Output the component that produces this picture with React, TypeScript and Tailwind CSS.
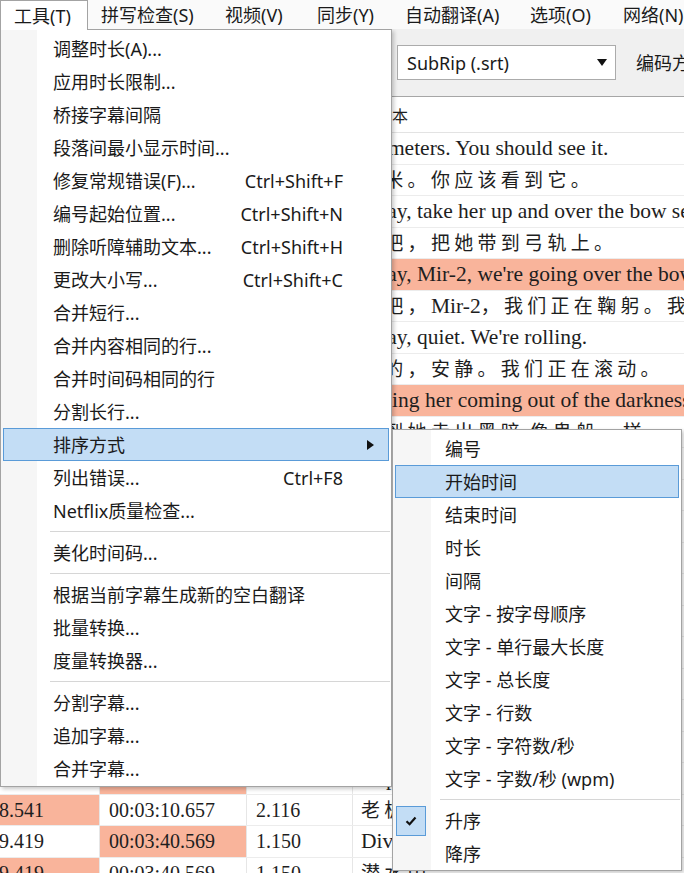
import React from 'react';

const CJK_RE = /([\u3000-\u303f\u4e00-\u9fff\uff00-\uffef]+)/;

type Entry = { label?: string; shortcut?: string; submenu?: boolean; active?: boolean; checked?: boolean; sep?: boolean };

const toolsMenu: Entry[] = [
  { label: '调整时长(A)...' },
  { label: '应用时长限制...' },
  { label: '桥接字幕间隔' },
  { label: '段落间最小显示时间...' },
  { label: '修复常规错误(F)...', shortcut: 'Ctrl+Shift+F' },
  { label: '编号起始位置...', shortcut: 'Ctrl+Shift+N' },
  { label: '删除听障辅助文本...', shortcut: 'Ctrl+Shift+H' },
  { label: '更改大小写...', shortcut: 'Ctrl+Shift+C' },
  { label: '合并短行...' },
  { label: '合并内容相同的行...' },
  { label: '合并时间码相同的行' },
  { label: '分割长行...' },
  { label: '排序方式', submenu: true, active: true },
  { label: '列出错误...', shortcut: 'Ctrl+F8' },
  { label: 'Netflix质量检查...' },
  { sep: true },
  { label: '美化时间码...' },
  { sep: true },
  { label: '根据当前字幕生成新的空白翻译' },
  { label: '批量转换...' },
  { label: '度量转换器...' },
  { sep: true },
  { label: '分割字幕...' },
  { label: '追加字幕...' },
  { label: '合并字幕...' },
];

const sortMenu: Entry[] = [
  { label: '编号' },
  { label: '开始时间', active: true },
  { label: '结束时间' },
  { label: '时长' },
  { label: '间隔' },
  { label: '文字 - 按字母顺序' },
  { label: '文字 - 单行最大长度' },
  { label: '文字 - 总长度' },
  { label: '文字 - 行数' },
  { label: '文字 - 字符数/秒' },
  { label: '文字 - 字数/秒 (wpm)' },
  { sep: true },
  { label: '升序', checked: true },
  { label: '降序' },
];

const menuBar = [
  { label: '工具(T)', w: 'w-[88px]', open: true },
  { label: '拼写检查(S)', w: 'w-[124px]' },
  { label: '视频(V)', w: 'w-[92px]' },
  { label: '同步(Y)', w: 'w-[88px]' },
  { label: '自动翻译(A)', w: 'w-[125px]' },
  { label: '选项(O)', w: 'w-[93px]' },
  { label: '网络(N)', w: 'w-[90px]' },
];

type Row = { c1: string; c2: string; c3: string; text: string; hlText?: boolean; hl1?: boolean; hl2?: boolean };

const rows: Row[] = [
  { c1: '00:02:31.210', c2: '00:02:33.544', c3: '2.334', text: '10 meters. You should see it.' },
  { c1: '00:02:31.210', c2: '00:02:33.544', c3: '2.334', text: '十米。你应该看到它。' },
  { c1: '00:02:34.012', c2: '00:02:36.890', c3: '2.878', text: 'Okay, take her up and over the bow section.' },
  { c1: '00:02:34.012', c2: '00:02:36.890', c3: '2.878', text: '好吧，把她带到弓轨上。' },
  { c1: '00:02:38.301', c2: '00:02:41.117', c3: '2.816', text: "Okay, Mir-2, we're going over the bow section.", hlText: true },
  { c1: '00:02:38.301', c2: '00:02:41.117', c3: '2.816', text: '好吧，Mir-2，我们正在鞠躬。我们' },
  { c1: '00:02:42.650', c2: '00:02:44.402', c3: '1.752', text: "Okay, quiet. We're rolling." },
  { c1: '00:02:42.650', c2: '00:02:44.402', c3: '1.752', text: '好的，安静。我们正在滚动。' },
  { c1: '00:02:46.075', c2: '00:02:49.312', c3: '3.237', text: 'Seeing her coming out of the darkness like a ghost ship.', hlText: true },
  { c1: '00:02:46.075', c2: '00:02:49.312', c3: '3.237', text: '看到她走出黑暗,像鬼船一样。' },
  { c1: '00:02:50.120', c2: '00:02:52.004', c3: '1.884', text: 'Still gets me every time.' },
  { c1: '00:02:50.120', c2: '00:02:52.004', c3: '1.884', text: '每次都让我激动。' },
  { c1: '00:02:53.400', c2: '00:02:55.980', c3: '2.580', text: 'Bring the lights down a little.' },
  { c1: '00:02:53.400', c2: '00:02:55.980', c3: '2.580', text: '把灯光调暗一点。' },
  { c1: '00:02:57.033', c2: '00:02:59.210', c3: '2.177', text: "There's the railing." },
  { c1: '00:02:57.033', c2: '00:02:59.210', c3: '2.177', text: '那是栏杆。' },
  { c1: '00:03:00.611', c2: '00:03:03.045', c3: '2.434', text: 'Look at that. Amazing.' },
  { c1: '00:03:00.611', c2: '00:03:03.045', c3: '2.434', text: '看那个，太神奇了。' },
  { c1: '00:03:04.210', c2: '00:03:06.702', c3: '2.492', text: 'Keep her steady.' },
  { c1: '00:03:04.210', c2: '00:03:06.702', c3: '2.492', text: '保持稳定。' },
  { c1: '00:03:06.900', c2: '00:03:08.433', c3: '1.533', text: 'Copy that.', hl2: true },
  { c1: '00:03:08.541', c2: '00:03:10.657', c3: '2.116', text: '老板，我们到了。', hl1: true },
  { c1: '00:03:39.419', c2: '00:03:40.569', c3: '1.150', text: 'Diving now.', hl2: true },
  { c1: '00:03:39.419', c2: '00:03:40.569', c3: '1.150', text: '潜水中。', hl1: true },
];

function Mixed({ text }: { text: string }) {
  const parts = text.split(CJK_RE).filter((p) => p !== '');
  return (
    <span className="whitespace-nowrap">
      {parts.map((p, i) =>
        CJK_RE.test(p) ? (
          <span key={i} className="font-['Noto_Sans_CJK_SC',sans-serif] text-[19px] tracking-[4.3px]">{p}</span>
        ) : (
          <span key={i} className="font-['Liberation_Serif',serif] text-[21.5px]">{p}</span>
        ),
      )}
    </span>
  );
}

function Arrow() {
  return (
    <svg width="7" height="10" viewBox="0 0 7 10" className="absolute right-[14px] top-1/2 -translate-y-1/2">
      <polygon points="0,0 7,5 0,10" fill="#111" />
    </svg>
  );
}

function Check() {
  return (
    <span className="absolute left-0 top-[1px] flex h-[30px] w-[30px] items-center justify-center border border-[#5a9bd8] bg-[#c3ddf5]">
      <svg width="12" height="10" viewBox="0 0 12 10">
        <path d="M1.5 5.2 L4.6 8.2 L10.5 1.6" fill="none" stroke="#111" strokeWidth="2.2" />
      </svg>
    </span>
  );
}

function MenuList({ entries, sepIndent }: { entries: Entry[]; sepIndent: string }) {
  return (
    <>
      {entries.map((e, i) =>
        e.sep ? (
          <div key={i} className="flex h-[9px] items-center">
            <div className={`${sepIndent} mr-[1px] h-px flex-1 bg-[#d6d6d6]`} />
          </div>
        ) : (
          <div
            key={i}
            className={`relative mx-[2px] flex h-[33px] items-center justify-between border pl-[49px] pr-[45px] ${
              e.active ? 'border-[#5a9bd8] bg-[#c3ddf5]' : 'border-transparent'
            }`}
          >
            {e.checked && <Check />}
            <span className="whitespace-nowrap leading-none">{e.label}</span>
            {e.shortcut && <span className="whitespace-nowrap leading-none">{e.shortcut}</span>}
            {e.submenu && <Arrow />}
          </div>
        ),
      )}
    </>
  );
}

export default function App() {
  return (
    <div className="relative h-[873px] w-[684px] overflow-hidden bg-white text-[#1a1a1a]">
      {/* 메뉴 바 */}
      <div className="relative z-30 flex h-[29px] bg-[#fafafa] font-['Noto_Sans','Noto_Sans_CJK_SC',sans-serif] text-[18px]">
        {menuBar.map((m) => (
          <div
            key={m.label}
            className={`flex shrink-0 items-center pl-[13px] ${m.w} ${
              m.open ? 'h-[30px] border-x border-t border-[#a3a3a3] bg-white pt-[1px]' : 'h-[29px]'
            }`}
          >
            <span className="whitespace-nowrap leading-none">{m.label}</span>
          </div>
        ))}
      </div>

      {/* 툴바 */}
      <div className="flex h-[68px] items-center border-b border-[#a6a6a6] bg-[#f0f0f0] font-['Noto_Sans','Noto_Sans_CJK_SC',sans-serif] text-[18px]">
        <div className="w-[397px] shrink-0" />
        <div className="flex h-[35px] w-[219px] shrink-0 items-center justify-between border border-[#ababab] bg-white pl-[9px] pr-[8px]">
          <span className="leading-none">SubRip (.srt)</span>
          <svg width="10" height="7" viewBox="0 0 10 7">
            <polygon points="0,0 10,0 5,7" fill="#111" />
          </svg>
        </div>
        <div className="ml-[10px] h-[44px] w-px bg-[#c4c4c4]" />
        <span className="ml-[10px] whitespace-nowrap leading-none">编码方式</span>
      </div>

      {/* 자막 목록 */}
      <div className="-ml-[70px] w-[754px] text-[#1e1e1e]">
        <div className="flex h-[36px] items-center border-b border-[#e3e3e3] font-['Noto_Sans_CJK_SC',sans-serif] text-[16px]">
          <div className="w-[170px] pl-[9px]">开始时间</div>
          <div className="w-[147px] pl-[9px]">结束时间</div>
          <div className="w-[106px] pl-[9px]">时长</div>
          <div className="flex-1 pl-[23px]">文本</div>
        </div>
        {rows.map((r, i) => (
          <div key={i} className="flex h-[31.5px] border-b border-[#ececec] font-['Liberation_Serif',serif] text-[20px]">
            <div className={`flex w-[170px] items-center overflow-hidden border-r border-[#e6e6e6] pl-[8px] ${r.hl1 ? 'bg-[#f9b49b]' : ''}`}>
              {r.c1}
            </div>
            <div className={`flex w-[147px] items-center overflow-hidden border-r border-[#e6e6e6] pl-[9px] ${r.hl2 ? 'bg-[#f9b49b]' : ''}`}>
              {r.c2}
            </div>
            <div className="flex w-[106px] items-center border-r border-[#e6e6e6] pl-[9px]">{r.c3}</div>
            <div className={`flex flex-1 items-center overflow-hidden pl-[8px] ${r.hlText ? 'bg-[#f9b49b]' : ''}`}>
              <Mixed text={r.text} />
            </div>
          </div>
        ))}
      </div>

      {/* 도구 메뉴 */}
      <div className="absolute left-0 top-[29px] z-20 w-[392px] border border-[#a3a3a3] bg-[linear-gradient(to_right,#f6f6f6_36px,#ffffff_36px)] pb-[1px] pt-[2px] font-['Noto_Sans','Noto_Sans_CJK_SC',sans-serif] text-[18px] shadow-[2px_2px_4px_rgba(0,0,0,0.22)]">
        <MenuList entries={toolsMenu} sepIndent="ml-[49px]" />
      </div>

      {/* 정렬 하위 메뉴 */}
      <div className="absolute left-[392px] top-[429px] z-20 w-[290px] border border-[#a3a3a3] bg-[linear-gradient(to_right,#f6f6f6_38px,#ffffff_38px)] pt-[2px] font-['Noto_Sans','Noto_Sans_CJK_SC',sans-serif] text-[18px] shadow-[2px_2px_4px_rgba(0,0,0,0.22)]">
        <MenuList entries={sortMenu} sepIndent="ml-[47px]" />
      </div>
    </div>
  );
}
